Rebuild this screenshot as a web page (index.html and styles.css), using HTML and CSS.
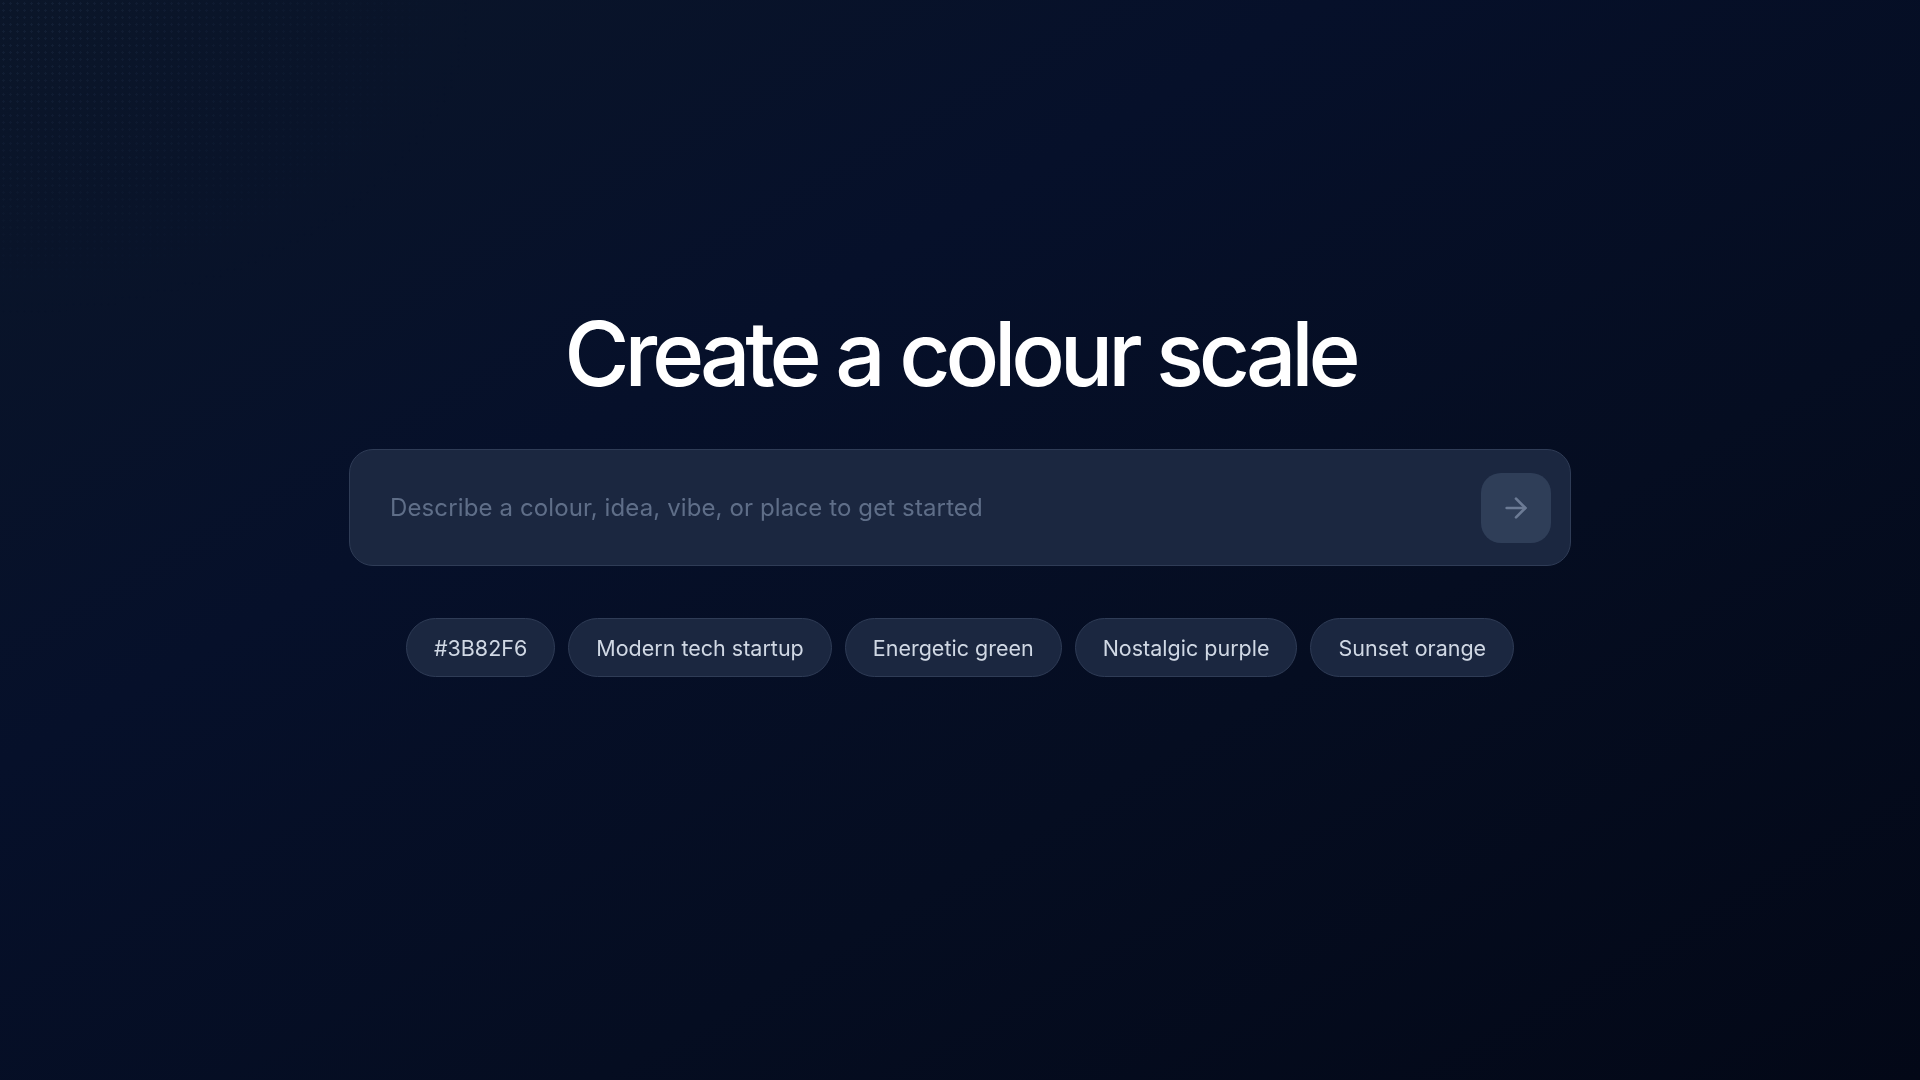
FILE: index.html
```html
<!DOCTYPE html>
<html lang="en">
<head>
    <meta charset="UTF-8">
    <title>Create a colour scale</title>
    <link rel="stylesheet" href="styles.css">
</head>
<body>

    <main class="hero">
      <h1 class="hero-title">Create a colour scale</h1>

      <form class="prompt" onsubmit="return false">
        <input class="prompt-input" type="text" placeholder="Describe a colour, idea, vibe, or place to get started">
        <button class="prompt-send" type="submit" aria-label="Generate">
          <svg viewBox="0 0 24 24" width="32" height="32" fill="none" stroke="currentColor" stroke-width="2" stroke-linecap="round" stroke-linejoin="round">
            <path d="M5 12h14"/>
            <path d="m12 5 7 7-7 7"/>
          </svg>
        </button>
      </form>

      <div class="suggestions">
        <button class="chip">#3B82F6</button>
        <button class="chip">Modern tech startup</button>
        <button class="chip">Energetic green</button>
        <button class="chip">Nostalgic purple</button>
        <button class="chip">Sunset orange</button>
      </div>
    </main>

</body>
</html>
```

FILE: styles.css
```css
html, body {
    margin: 0;
    height: 100%;
}

body {
    background: linear-gradient(150deg, #0b1629 0%, #06102a 35%, #050d21 65%, #030817 100%);
    color: #f5f7fb;
    font-family: Inter, 'Noto Sans', sans-serif;
    overflow: hidden;
}

/* faint dotted texture in the top-left corner */
body::before {
    content: "";
    position: fixed;
    inset: 0;
    background-image: radial-gradient(circle, rgba(90, 120, 170, 0.09) 1px, transparent 1.2px);
    background-size: 7px 7px;
    -webkit-mask-image: radial-gradient(ellipse 480px 320px at 0 0, #000 15%, transparent 100%);
    mask-image: radial-gradient(ellipse 480px 320px at 0 0, #000 15%, transparent 100%);
    pointer-events: none;
}

.hero {
    position: relative;
    display: flex;
    flex-direction: column;
    align-items: center;
    padding-top: 309px;
}

.hero-title {
    margin: 0;
    font-size: 89px;
    font-weight: 450;
    line-height: 1;
    letter-spacing: -0.058em;
    color: #ffffff;
}

.prompt {
    margin-top: 51px;
    width: 1222px;
    height: 117px;
    box-sizing: border-box;
    display: flex;
    align-items: center;
    padding: 0 19px 0 38px;
    background-color: #1b2740;
    border: 1px solid #2f3c56;
    border-radius: 24px;
}

.prompt-input {
    flex: 1;
    background: transparent;
    border: none;
    outline: none;
    font-family: inherit;
    font-size: 24px;
    color: #e2e8f0;
    letter-spacing: 0.005em;
}

.prompt-input::placeholder {
    color: #5f6e88;
}

.prompt-send {
    width: 70px;
    height: 70px;
    display: flex;
    align-items: center;
    justify-content: center;
    border: none;
    border-radius: 20px;
    background-color: #2f3e58;
    color: #6c7b95;
    padding: 0;
    cursor: pointer;
}

.suggestions {
    margin-top: 52px;
    display: flex;
    gap: 13px;
}

.chip {
    height: 59px;
    padding: 0 27px;
    background-color: #1b2740;
    border: 1px solid #2f3c56;
    border-radius: 30px;
    color: #d0d8e4;
    font-family: inherit;
    font-size: 21.5px;
    cursor: pointer;
}
```
